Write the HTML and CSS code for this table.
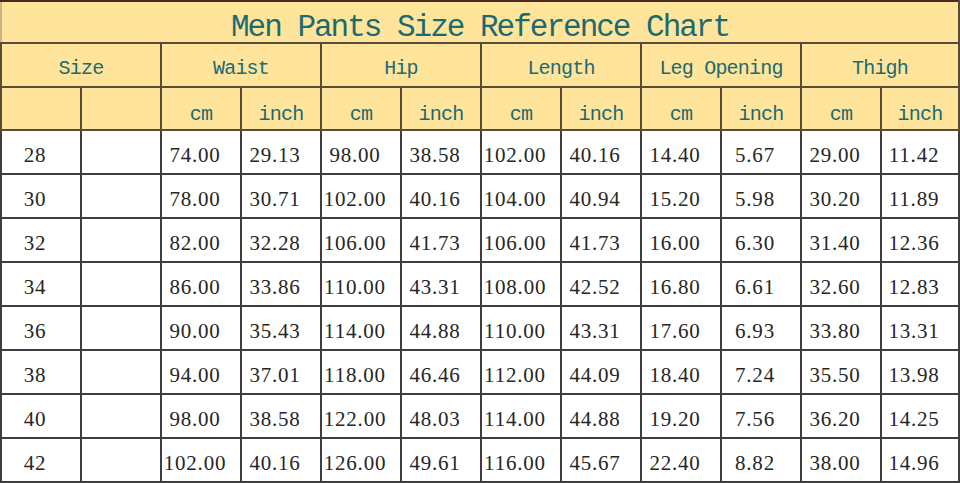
FILE: index.html
```html
<!DOCTYPE html>
<html>
<head>
<meta charset="utf-8">
<link rel="stylesheet" href="styles.css">
</head>
<body>
<table class="chart">
  <colgroup>
    <col class="c"><col class="c"><col class="c"><col class="c"><col class="c"><col class="c">
    <col class="c"><col class="c"><col class="c"><col class="c"><col class="c"><col class="c last">
  </colgroup>
  <thead>
    <tr class="title-row"><th colspan="12" class="title">Men Pants Size Reference Chart</th></tr>
    <tr class="h1"><th colspan="2">Size</th><th colspan="2">Waist</th><th colspan="2">Hip</th><th colspan="2">Length</th><th colspan="2">Leg Opening</th><th colspan="2">Thigh</th></tr>
    <tr class="h2"><th></th><th></th><th>cm</th><th>inch</th><th>cm</th><th>inch</th><th>cm</th><th>inch</th><th>cm</th><th>inch</th><th>cm</th><th>inch</th></tr>
  </thead>
  <tbody>
    <tr><td>28</td><td></td><td>74.00</td><td>29.13</td><td>98.00</td><td>38.58</td><td>102.00</td><td>40.16</td><td>14.40</td><td>5.67</td><td>29.00</td><td>11.42</td></tr>
    <tr><td>30</td><td></td><td>78.00</td><td>30.71</td><td>102.00</td><td>40.16</td><td>104.00</td><td>40.94</td><td>15.20</td><td>5.98</td><td>30.20</td><td>11.89</td></tr>
    <tr><td>32</td><td></td><td>82.00</td><td>32.28</td><td>106.00</td><td>41.73</td><td>106.00</td><td>41.73</td><td>16.00</td><td>6.30</td><td>31.40</td><td>12.36</td></tr>
    <tr><td>34</td><td></td><td>86.00</td><td>33.86</td><td>110.00</td><td>43.31</td><td>108.00</td><td>42.52</td><td>16.80</td><td>6.61</td><td>32.60</td><td>12.83</td></tr>
    <tr><td>36</td><td></td><td>90.00</td><td>35.43</td><td>114.00</td><td>44.88</td><td>110.00</td><td>43.31</td><td>17.60</td><td>6.93</td><td>33.80</td><td>13.31</td></tr>
    <tr><td>38</td><td></td><td>94.00</td><td>37.01</td><td>118.00</td><td>46.46</td><td>112.00</td><td>44.09</td><td>18.40</td><td>7.24</td><td>35.50</td><td>13.98</td></tr>
    <tr><td>40</td><td></td><td>98.00</td><td>38.58</td><td>122.00</td><td>48.03</td><td>114.00</td><td>44.88</td><td>19.20</td><td>7.56</td><td>36.20</td><td>14.25</td></tr>
    <tr><td>42</td><td></td><td>102.00</td><td>40.16</td><td>126.00</td><td>49.61</td><td>116.00</td><td>45.67</td><td>22.40</td><td>8.82</td><td>38.00</td><td>14.96</td></tr>
  </tbody>
</table>
</body>
</html>
```
FILE: styles.css
```css
html, body {
  margin: 0;
  padding: 0;
  background: #fdfcf6;
}
.chart {
  margin-left: 0;
  width: 958px;
  border-collapse: collapse;
  table-layout: fixed;
}
.c { width: 80px; }
.last { width: 78px; }
.chart th, .chart td {
  border: 2px solid #3e3e3e;
  padding: 0;
  overflow: hidden;
  white-space: nowrap;
}
.chart thead th {
  background: #fee59b;
  border-color: #5a4a3a;
  font-family: "Liberation Mono", "DejaVu Sans Mono", monospace;
  font-weight: normal;
  color: #1d6a70;
  text-align: center;
}
.chart thead .title-row th {
  border-top: 2px solid #4a2a20;
  border-left-color: #c9b48c;
}
.title {
  height: 42px;
  font-size: 31px;
  line-height: 26px;
  letter-spacing: -2px;
  color: #1a6890;
  padding-top: 11px !important;
  box-sizing: border-box;
}
.h1 th {
  height: 44px;
  font-size: 20px;
  line-height: 20px;
  letter-spacing: -0.8px;
  padding-top: 7px !important;
  box-sizing: border-box;
}
.h2 th {
  height: 43px;
  font-size: 20px;
  line-height: 20px;
  letter-spacing: -0.8px;
  padding-top: 12px !important;
  box-sizing: border-box;
}
.chart tbody td {
  height: 44px;
  box-sizing: border-box;
  background: #ffffff;
  font-family: "Liberation Serif", "Times New Roman", serif;
  font-size: 21px;
  line-height: 22px;
  letter-spacing: 0.8px;
  color: #262626;
  padding: 6px 12px 0 0;
  text-align: center;
}
```
